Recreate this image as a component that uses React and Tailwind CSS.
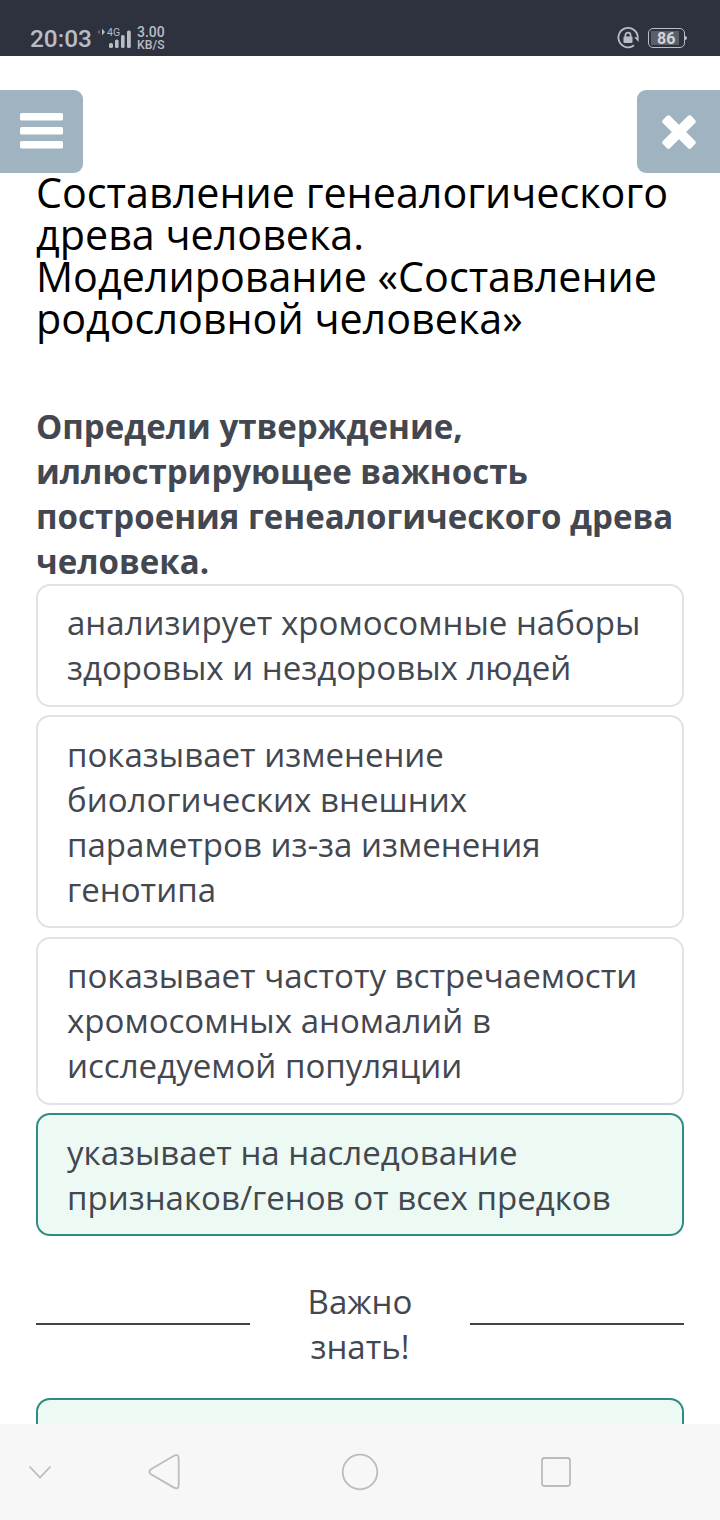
import clsx from "clsx";

const answers = [
  {
    lines: ["анализирует хромосомные наборы", "здоровых и нездоровых людей"],
  },
  {
    lines: [
      "показывает изменение",
      "биологических внешних",
      "параметров из-за изменения",
      "генотипа",
    ],
  },
  {
    lines: [
      "показывает частоту встречаемости",
      "хромосомных аномалий в",
      "исследуемой популяции",
    ],
  },
  {
    lines: ["указывает на наследование", "признаков/генов от всех предков"],
    correct: true,
  },
];

function StatusBar() {
  return (
    <div className="flex h-14 shrink-0 items-start justify-between bg-[#2d323e] pr-[33px] pl-[30px] font-['Roboto',sans-serif] text-[#b9bdc6]">
      <div className="flex items-start">
        <span className="mt-[23px] w-[67px] text-[24.4px] leading-8 font-medium whitespace-nowrap">
          20:03
        </span>
        {/* Signal */}
        <svg width="36" height="22" viewBox="0 0 36 22" className="mt-[27px]" fill="currentColor">
          <path d="M3 2.5v5L.2 5z" opacity=".35" />
          <path d="M5 1.5v7L8 5z" />
          <text x="10" y="9.4" fontSize="10.5">4G</text>
          <rect x="12" y="16" width="4" height="5" rx="1.6" />
          <rect x="18" y="12.5" width="3.6" height="8.5" rx="1.5" />
          <rect x="24" y="8" width="3.6" height="13" rx="1.5" />
          <rect x="30" y="3.5" width="3.8" height="17.5" rx="1.5" />
        </svg>
        <div className="mt-[26px] ml-1 text-[12.2px] leading-[12.5px] font-medium">
          <div className="text-[14px]">3.00</div>
          <div>KB/S</div>
        </div>
      </div>
      <div className="mt-[26px] flex items-start gap-2">
        {/* Rotation lock */}
        <svg width="23" height="23" viewBox="0 0 23 23" fill="none" stroke="currentColor">
          <path d="M17 19.3A9.7 9.7 0 1 1 20.8 11.5" strokeWidth="1.8" />
          <path d="M17.2 11.2h4.4v4.8z" fill="currentColor" stroke="none" />
          <rect x="6.5" y="10.5" width="9" height="6.5" rx="1" fill="currentColor" stroke="none" />
          <path d="M8.4 11V9.3a2.6 2.6 0 0 1 5.2 0V11" strokeWidth="1.7" />
        </svg>
        <div className="mt-[2px] flex items-center">
          <div className="h-5 w-[37px] rounded-[5px] border border-current p-[2px]">
            <div className="h-full w-[28px] bg-[#5b5f69] pl-[6px] text-[16px] leading-[16px] font-bold text-[#d2d4d8]">
              86
            </div>
          </div>
          <div className="h-1 w-[2px] rounded-r-sm bg-current" />
        </div>
      </div>
    </div>
  );
}

function Answer({ lines, correct }) {
  return (
    <button
      className={clsx(
        "block w-full rounded-[14px] border-2 py-[14.4px] pl-[29px] text-left whitespace-nowrap",
        correct ? "border-[#2f8c83] bg-[#edfaf3]" : "border-[#e0e3e4] bg-white"
      )}
    >
      {lines.map((line) => (
        <span key={line} className="block">
          {line}
        </span>
      ))}
    </button>
  );
}

function NavBar() {
  return (
    <div className="flex h-24 shrink-0 items-center bg-[#f7f7f7] text-[#bcbcbc]">
      <svg width="720" height="96" viewBox="0 0 720 96" fill="none" stroke="currentColor" strokeWidth="1.8">
        <path d="M29.5 42.5 40 53.5l10.5-11" />
        <path d="M151 45.3 173.5 32q5.2-2.6 5.2 2.4v26.6q0 5-5.2 2.4L151 50.2q-3.2-2.4 0-4.9z" />
        <circle cx="360" cy="48" r="17.3" />
        <rect x="542" y="34" width="28" height="28" rx="2.5" />
      </svg>
    </div>
  );
}

export default function App() {
  return (
    <div className="flex h-[1520px] w-[720px] flex-col overflow-hidden bg-white font-['Open_Sans','Noto_Sans',sans-serif]">
      <StatusBar />
      <main className="min-h-0 flex-1 overflow-hidden text-[33.05px] leading-[45px] text-[#434750]">
        <div className="flex justify-between pt-[34px]">
          <button className="flex h-[83px] w-[83px] items-center justify-center rounded-r-[9px] bg-[#9fb3c0]">
            <svg width="43" height="36" viewBox="0 0 43 36" fill="white" className="-mt-0.5">
              <rect width="43" height="7.5" rx="1.5" />
              <rect y="14" width="43" height="7.5" rx="1.5" />
              <rect y="28" width="43" height="7.5" rx="1.5" />
            </svg>
          </button>
          <button className="flex h-[83px] w-[83px] items-center justify-center rounded-l-[9px] bg-[#9fb3c0]">
            <svg width="34" height="34" viewBox="0 0 34 34" fill="white">
              <rect x="-3" y="12" width="40" height="10" rx="2.5" transform="rotate(45 17 17)" />
              <rect x="-3" y="12" width="40" height="10" rx="2.5" transform="rotate(-45 17 17)" />
            </svg>
          </button>
        </div>

        <div className="px-9">
          <h1 className="-mt-[2px] text-[41.27px] leading-[42px] whitespace-nowrap text-black">
            Составление генеалогического
            <br />
            древа человека.
            <br />
            Моделирование «Составление
            <br />
            родословной человека»
          </h1>

          <h2 className="mt-[65px] font-bold whitespace-nowrap">
            Определи утверждение,
            <br />
            иллюстрирующее важность
            <br />
            построения генеалогического древа
            <br />
            человека.
          </h2>

          <div className="flex flex-col gap-[8.6px]">
            {answers.map((answer) => (
              <Answer key={answer.lines[0]} {...answer} />
            ))}
          </div>

          {/* Divider */}
          <div className="mt-[43.5px] flex items-center justify-between">
            <div className="h-[2px] w-[214px] bg-[#434447]" />
            <div className="text-center">
              Важно
              <br />
              знать!
            </div>
            <div className="h-[2px] w-[214px] bg-[#434447]" />
          </div>

          <div className="mt-[28.5px] h-40 rounded-[14px] border-2 border-[#2f8c83] bg-[#edfaf3]" />
        </div>
      </main>
      <NavBar />
    </div>
  );
}
